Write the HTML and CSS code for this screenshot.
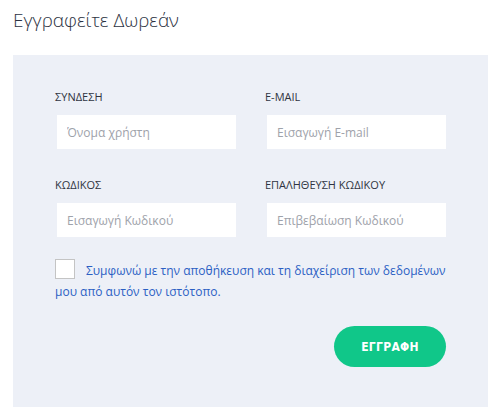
FILE: index.html
```html
<!DOCTYPE html>
<html lang="el">
<head>
<meta charset="utf-8">
<link rel="stylesheet" href="styles.css">
</head>
<body>
<h1 class="title">Εγγραφείτε Δωρεάν</h1>
<section class="panel">
  <form class="form">
    <div class="fields">
      <div class="field">
        <label class="label">ΣΥΝΔΕΣΗ</label>
        <input class="input" type="text" placeholder="Όνομα χρήστη">
      </div>
      <div class="field">
        <label class="label">E-MAIL</label>
        <input class="input" type="text" placeholder="Εισαγωγή E-mail">
      </div>
      <div class="field">
        <label class="label">ΚΩΔΙΚΟΣ</label>
        <input class="input" type="password" placeholder="Εισαγωγή Κωδικού">
      </div>
      <div class="field">
        <label class="label">ΕΠΑΛΗΘΕΥΣΗ ΚΩΔΙΚΟΥ</label>
        <input class="input" type="password" placeholder="Επιβεβαίωση Κωδικού">
      </div>
    </div>
    <p class="consent"><span class="box"></span>Συμφωνώ με την αποθήκευση και τη διαχείριση των δεδομένων μου από αυτόν τον ιστότοπο.</p>
    <div class="actions">
      <button class="btn" type="button">ΕΓΓΡΑΦΗ</button>
    </div>
  </form>
</section>
</body>
</html>
```
FILE: styles.css
```css
html, body {
  margin: 0;
  padding: 0;
  background: #ffffff;
}
body {
  font-family: "Open Sans", "Noto Sans", sans-serif;
  color: #2f3441;
}
.title {
  margin: 0;
  padding: 7px 0 0 13px;
  height: 55px;
  box-sizing: border-box;
  font-size: 19px;
  font-weight: 300;
  line-height: 26px;
  color: #2c3242;
}
.panel {
  margin: 0 12px 0 13px;
  background: #edf0f7;
  padding: 34px 0 0 42px;
  min-height: 352px;
  box-sizing: border-box;
}
.form {
  width: 391px;
}
.fields {
  display: grid;
  grid-template-columns: 181px 181px;
  column-gap: 29px;
  row-gap: 28px;
}
.field {
  display: flex;
  flex-direction: column;
}
.label {
  font-size: 11px;
  line-height: 15px;
  height: 15px;
  margin-bottom: 11px;
  color: #2f3441;
}
.input {
  margin: 0 0 0 2px;
  width: 179px;
  height: 34px;
  box-sizing: border-box;
  border: none;
  outline: none;
  background: #ffffff;
  padding: 0 10px;
  font-family: "Open Sans", "Noto Sans", sans-serif;
  font-size: 12px;
  color: #2f3441;
}
.input::placeholder {
  color: #9ea2aa;
}
.consent {
  margin: 23px 0 0 0;
  font-size: 12px;
  line-height: 21px;
  color: #2b5fc4;
}
.box {
  display: inline-block;
  width: 20px;
  height: 20px;
  box-sizing: border-box;
  background: #ffffff;
  border: 1px solid #c4c4c4;
  vertical-align: middle;
  margin: -5px 11px 0 0;
}
.actions {
  display: flex;
  justify-content: flex-end;
  margin-top: 24px;
}
.btn {
  width: 112px;
  height: 41px;
  border: none;
  border-radius: 21px;
  background: #10c789;
  color: #ffffff;
  font-family: "DejaVu Sans Condensed", "DejaVu Sans", sans-serif;
  font-weight: bold;
  font-size: 12px;
  letter-spacing: 0.3px;
  cursor: pointer;
}
```
